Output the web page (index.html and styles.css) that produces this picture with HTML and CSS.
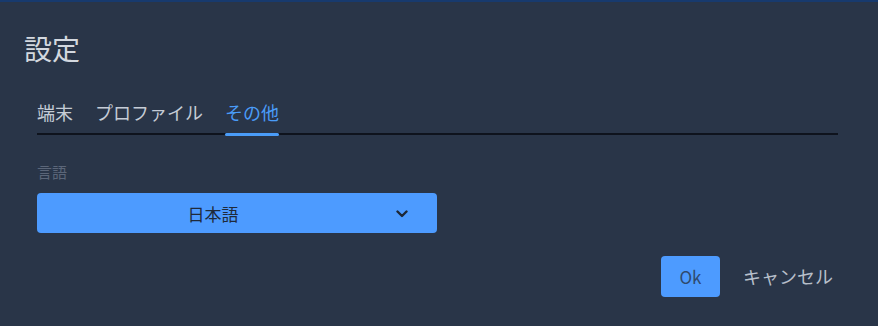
FILE: index.html
```html
<!DOCTYPE html>
<html lang="ja">
<head>
    <meta charset="UTF-8">
    <title>設定</title>
    <link rel="stylesheet" href="styles.css">
</head>
<body>
    <div class="dialog">
        <h1 class="title">設定</h1>
        <div class="tabs">
            <span class="tab">端末</span>
            <span class="tab">プロファイル</span>
            <span class="tab active">その他</span>
        </div>
        <div class="field">
            <label class="label">言語</label>
            <div class="select">
                <span class="value">日本語</span>
                <svg class="chevron" width="12" height="8" viewBox="0 0 12 8">
                    <path d="M1.5 1.5 L6 6 L10.5 1.5" fill="none" stroke="#1d2736" stroke-width="2.4" stroke-linecap="round" stroke-linejoin="round"/>
                </svg>
            </div>
        </div>
        <div class="actions">
            <button class="btn ok">Ok</button>
            <button class="btn cancel">キャンセル</button>
        </div>
    </div>
</body>
</html>
```

FILE: styles.css
```css
html, body{
    margin: 0;
    padding: 0;
    background: #ffffff;
}

body{
    font-family: "Noto Sans CJK JP", "Noto Sans", sans-serif;
    width: 880px;
    height: 330px;
}

.dialog{
    width: 878px;
    height: 324px;
    background: #293548;
    border-top: 2px solid #173a6e;
    overflow: hidden;
}

.title{
    margin: 0;
    padding: 29px 0 0 24px;
    font-size: 28px;
    font-weight: normal;
    line-height: 34px;
    color: #d3d8df;
}

.tabs{
    display: flex;
    gap: 22px;
    margin: 35px 40px 0 37px;
    border-bottom: 2px solid #0e131d;
    height: 33px;
}

.tab{
    font-size: 18px;
    line-height: 24px;
    color: #c5ccd6;
    position: relative;
}

.tab.active{
    color: #4a9cf8;
}

.tab.active::after{
    content: "";
    position: absolute;
    left: 0;
    right: 0;
    bottom: -3px;
    height: 3px;
    border-radius: 2px;
    background: #4a9cf8;
}

.field{
    margin: 27px 0 0 37px;
}

.label{
    display: block;
    font-size: 15px;
    line-height: 20px;
    color: #5b6679;
    margin-bottom: 11px;
}

.select{
    width: 400px;
    height: 40px;
    background: #4d9bff;
    border-radius: 4px;
    display: flex;
    align-items: center;
    box-sizing: border-box;
    padding-right: 48px;
    position: relative;
}

.value{
    flex: 1;
    text-align: center;
    font-size: 17px;
    color: #1f2a3a;
}

.chevron{
    position: absolute;
    right: 29px;
    top: 17px;
}

.actions{
    display: flex;
    justify-content: flex-end;
    align-items: center;
    gap: 23px;
    margin: 23px 45px 0 0;
}

.btn{
    font-family: inherit;
    border: none;
    background: none;
    padding: 0;
    cursor: pointer;
}

.ok{
    width: 59px;
    height: 41px;
    background: #4d9bff;
    border-radius: 4px;
    font-size: 17px;
    color: #2f4a6e;
}

.cancel{
    font-size: 18px;
    color: #b7bfca;
    line-height: 41px;
}
```
